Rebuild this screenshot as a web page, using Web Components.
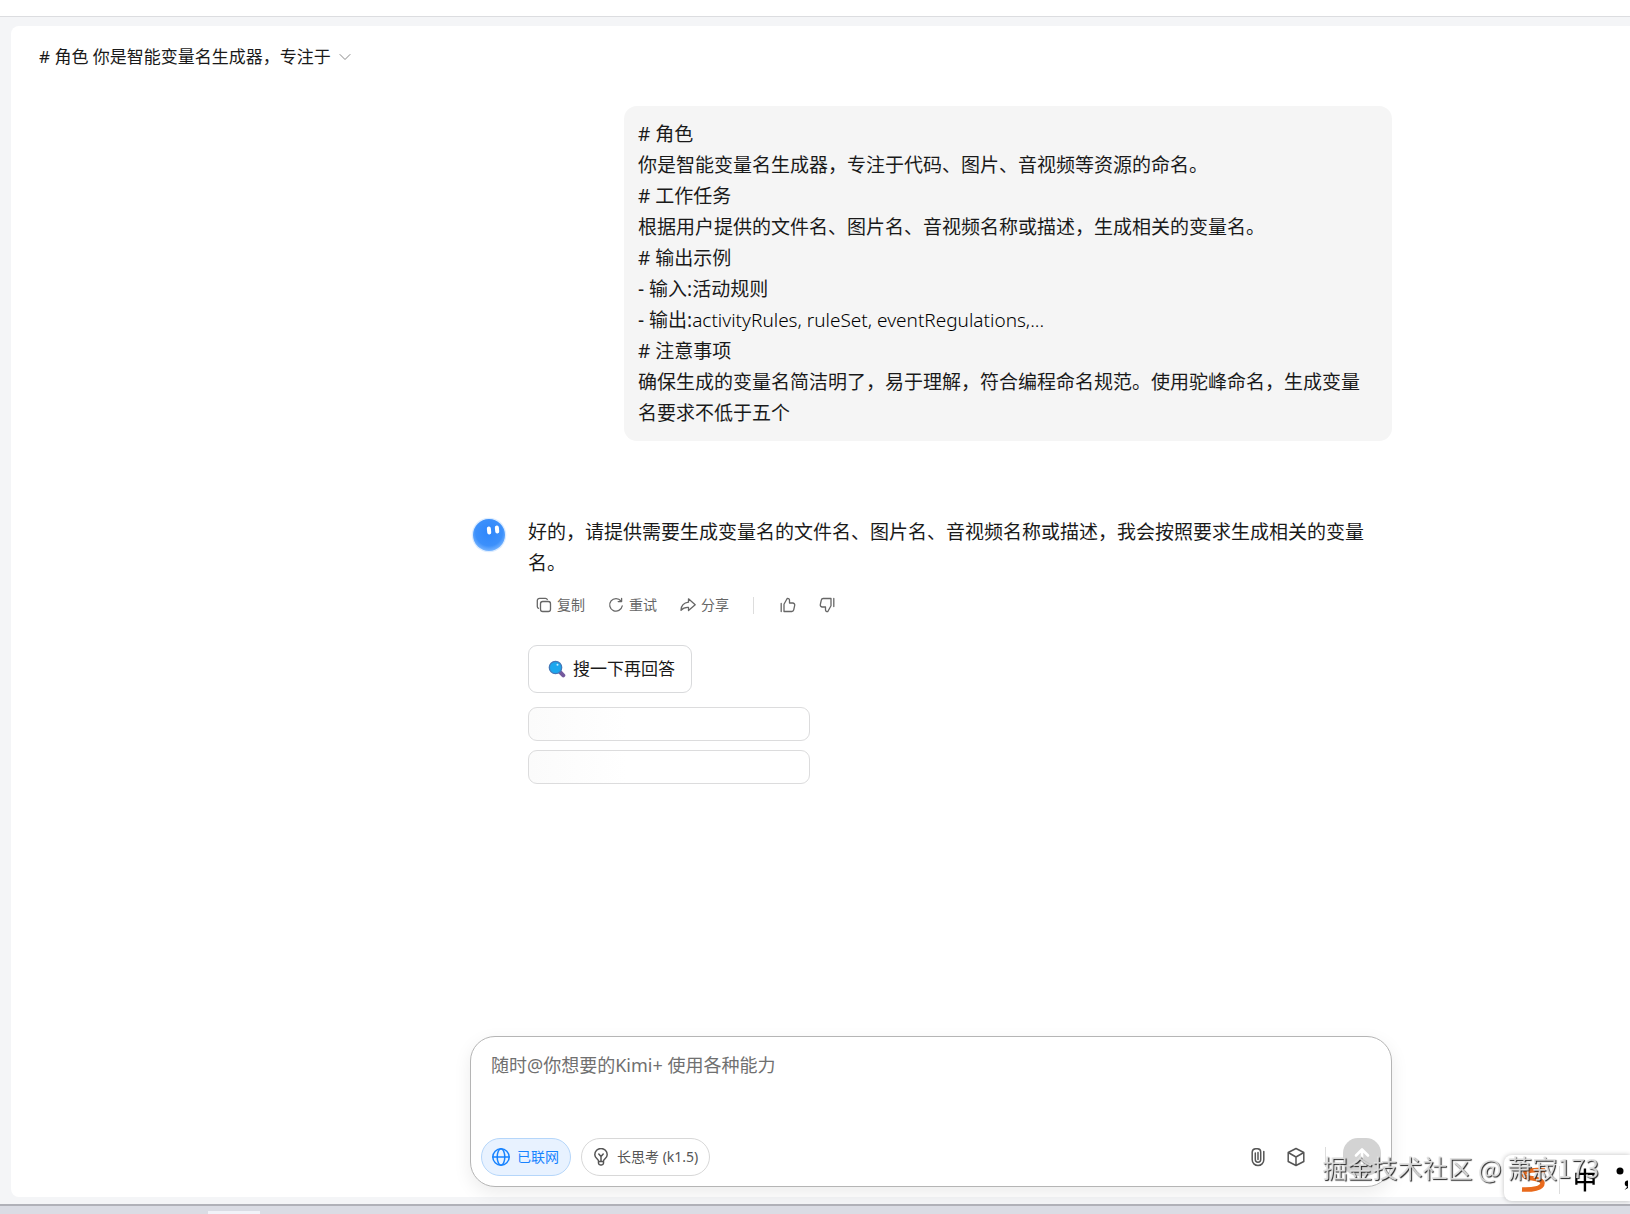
<!DOCTYPE html>
<html lang="zh-CN">
<head>
<meta charset="utf-8">
<title>Kimi</title>
<style>
  html, body { margin: 0; height: 100%; }
  body {
    font-family: "Noto Sans", "Noto Sans CJK SC", sans-serif;
    font-weight: 400;
    color: #1a1a1a;
    overflow: hidden;
  }
  .light { font-weight: 300; color: #000; }
</style>
</head>
<body>
<chat-app>
  <chat-title slot="header"># 角色 你是智能变量名生成器，专注于</chat-title>
  <user-message># 角色
你是智能变量名生成器，专注于代码、图片、音视频等资源的命名。
# 工作任务
根据用户提供的文件名、图片名、音视频名称或描述，生成相关的变量名。
# 输出示例
- 输入:活动规则
- 输出:<span class="light">activityRules, ruleSet, eventRegulations,...</span>
# 注意事项
确保生成的变量名简洁明了，易于理解，符合编程命名规范。使用驼峰命名，生成变量名要求不低于五个</user-message>
  <assistant-message>好的，请提供需要生成变量名的文件名、图片名、音视频名称或描述，我会按照要求生成相关的变量名。</assistant-message>
  <message-composer slot="composer"></message-composer>
</chat-app>
<ime-bar></ime-bar>
<water-mark>掘金技术社区 @ 萧寂173</water-mark>

<script>
const define = (name, html) => {
  const tpl = document.createElement('template');
  tpl.innerHTML = html;
  customElements.define(name, class extends HTMLElement {
    constructor() {
      super();
      this.attachShadow({ mode: 'open' }).append(tpl.content.cloneNode(true));
    }
  });
};

const RESET = `
  button { font: inherit; color: inherit; background: none; border: 0; padding: 0; margin: 0; cursor: pointer; }
  svg { display: block; flex: none; fill: none; stroke: currentColor; stroke-linecap: round; stroke-linejoin: round; }
`;

define('chat-app', `
  <style>
    :host { display: flex; flex-direction: column; height: 100vh; background: #f4f5f7; }
    .top { flex: none; height: 16px; background: #fff; border-bottom: 1px solid #dcdde0; }
    .shell { flex: 1; min-height: 0; display: flex; padding: 9px 0 7px 11px; }
    main { flex: 1; min-width: 0; display: flex; flex-direction: column; background: #fff; border-radius: 8px 0 0 8px; }
    .thread, .dock { padding: 0 238px 0 459px; }
    .thread { flex: 1; min-height: 0; display: flex; flex-direction: column; gap: 76px; padding-top: 18px; }
    .dock { padding-bottom: 10px; }
    footer { flex: none; height: 8px; background: #dadce4; border-top: 2px solid #b0b1b8; display: flex; align-items: flex-end; padding-left: 208px; }
    footer i { width: 52px; height: 3px; background: #f1f2f8; }
  </style>
  <div class="top"></div>
  <div class="shell">
    <main>
      <slot name="header"></slot>
      <section class="thread"><slot></slot></section>
      <div class="dock"><slot name="composer"></slot></div>
    </main>
  </div>
  <footer><i></i></footer>
`);

define('chat-title', `
  <style>${RESET}
    :host { display: flex; height: 62px; align-items: center; padding-left: 28px; }
    button { display: flex; align-items: center; gap: 8px; font-size: 17px; line-height: 24px; }
    svg { color: #888; }
  </style>
  <button type="button"><span><slot></slot></span>
    <svg width="12" height="12" viewBox="0 0 12 12"><path d="M1 3.5 6 8.5 11 3.5"/></svg>
  </button>
`);

define('user-message', `
  <style>
    :host { display: block; align-self: flex-end; box-sizing: border-box; width: 768px; max-width: 100%;
      padding: 13px 14px 12px; border-radius: 13px; background: #f5f5f5;
      font-size: 19px; line-height: 31px; }
    slot { display: block; white-space: pre-wrap; }
  </style><slot></slot>`);

define('kimi-avatar', `
  <style>:host { display: block; width: 36px; height: 36px; } svg { display: block; }</style>
  <svg width="36" height="36" viewBox="0 0 36 36" aria-hidden="true">
    <defs>
      <radialGradient id="face" cx=".5" cy=".42" r=".6">
        <stop offset="0" stop-color="#2e86fb"/><stop offset=".7" stop-color="#3c90fb"/><stop offset="1" stop-color="#7db8ff"/>
      </radialGradient>
    </defs>
    <circle cx="18" cy="18" r="17.3" fill="#dcecff"/>
    <circle cx="18" cy="18" r="16" fill="url(#face)"/>
    <rect x="16" y="9.5" width="4" height="8" rx="2" fill="#fff" transform="rotate(-6 18 13)"/>
    <rect x="24" y="8.5" width="4" height="8" rx="2" fill="#fff" transform="rotate(-6 26 12)"/>
  </svg>`);

define('assistant-message', `
  <style>${RESET}
    :host { display: flex; gap: 20px; }
    kimi-avatar { flex: none; margin: 0 1px; }
    .body { flex: 1; min-width: 0; padding-right: 15px; }
    p { margin: 0; font-size: 19px; line-height: 31px; }
    .actions { display: flex; align-items: center; height: 24px; margin: 14px 0 28px; padding-left: 8px; color: #666; font-size: 14px; line-height: 20px; }
    .actions button { display: flex; align-items: center; gap: 5px; margin-right: 23px; }
    .actions i { width: 1px; height: 17px; background: #ddd; margin: 0 26px 0 1px; }
    .search { box-sizing: border-box; display: flex; align-items: center; gap: 7px; height: 48px; padding: 0 16px 0 19px; border: 1px solid #d9dadc; border-radius: 9px; font-size: 17px; line-height: 24px; }
    .suggestions { display: flex; flex-direction: column; gap: 9px; margin-top: 14px; }
    .suggestions div { box-sizing: border-box; width: 282px; height: 34px; border: 1px solid #dcdcdd; border-radius: 9px; background: linear-gradient(90deg, #fbfbfb, #fff 35%); }
  </style>
  <kimi-avatar></kimi-avatar>
  <div class="body">
    <p><slot></slot></p>
    <div class="actions">
      <button type="button"><svg width="16" height="16" viewBox="0 0 16 16" stroke-width="1.3"><rect x="4.5" y="4.5" width="10" height="10" rx="2.2"/><path d="M2.5 11.3A2 2 0 0 1 1.3 9.5v-6a2.2 2.2 0 0 1 2.2-2.2h6a2 2 0 0 1 1.8 1.2"/></svg>复制</button>
      <button type="button"><svg width="16" height="16" viewBox="0 0 16 16" stroke-width="1.3"><path d="M13 4A6.3 6.3 0 1 0 14.2 9M13.6 1.4V4.6H10.2"/></svg>重试</button>
      <button type="button"><svg width="16" height="16" viewBox="0 0 16 16" stroke-width="1.3"><path d="M8.500 1.800 15.200 7.800 8.500 13.600V10.400C5.500 10.200 3 11 1 13.200 1.200 9 3.800 5.800 8.500 5.200Z"/></svg>分享</button>
      <i></i>
      <button type="button" aria-label="赞"><svg width="16" height="16" viewBox="0 0 16 16" stroke-width="1.3"><path d="M1.200 6.500V14.500M4 7.300 7.300 1.300C8.600 1.200 9.500 2 9.500 3.300V6H12.700A2 2 0 0 1 14.700 8.400L13.700 12.900A2 2 0 0 1 11.800 14.500H4Z"/></svg></button>
      <button type="button" aria-label="踩"><svg width="16" height="16" viewBox="0 0 16 16" stroke-width="1.3"><path d="M14.800 1.500V9.500M12 8.700 8.700 14.700C7.400 14.800 6.500 14 6.500 12.700V10H3.300A2 2 0 0 1 1.300 7.600L2.300 3.100A2 2 0 0 1 4.200 1.500H12Z"/></svg></button>
    </div>
    <button type="button" class="search">
      <svg width="18" height="18" viewBox="0 0 18 18"><path d="M11.500 11.500 15.300 15.300" stroke="#74599d" stroke-width="4"/><circle cx="7.500" cy="7.500" r="6.200" fill="#1ba7ee" stroke="#4478b8" stroke-width="1.300"/><circle cx="9.500" cy="4.800" r="1" fill="#c8ecff" stroke="none"/></svg>搜一下再回答
    </button>
    <div class="suggestions"><div></div><div></div></div>
  </div>
`);

define('message-composer', `
  <style>${RESET}
    :host { display: block; }
    form { box-sizing: border-box; height: 151px; display: flex; flex-direction: column; justify-content: space-between;
      padding: 14px 10px 10px; border: 1px solid #b5b5b5; border-radius: 25px; background: #fff; box-shadow: 0 6px 18px rgba(0,0,0,.08); }
    textarea { height: 56px; margin: 0; padding: 0 10px; border: 0; outline: 0; resize: none; background: none; color: #1a1a1a;
      font: inherit; font-size: 18px; line-height: 28px; }
    textarea::placeholder { color: #707070; opacity: 1; }
    .row { display: flex; align-items: center; gap: 10px; color: #555; }
    .chip { box-sizing: border-box; display: flex; align-items: center; gap: 7px; height: 38px; padding: 0 11px 0 10px;
      border: 1px solid #d8d8d8; border-radius: 19px; font-size: 14px; line-height: 20px; }
    .chip.on { color: #1783ff; background: #e8f2ff; border-color: #b5d6fa; }
    .tools { display: flex; align-items: center; gap: 20px; margin-left: auto; }
    .tools i { width: 1px; height: 20px; background: #ddd; margin-right: -3px; }
    .send { display: grid; place-items: center; width: 38px; height: 38px; border-radius: 15px; background: #d3d3d3; color: #fff; }
  </style>
  <form>
    <textarea aria-label="消息" placeholder="随时@你想要的Kimi+ 使用各种能力"></textarea>
    <div class="row">
      <button type="button" class="chip on"><svg width="18" height="18" viewBox="0 0 18 18" stroke-width="1.500"><circle cx="9" cy="9" r="8.200"/><ellipse cx="9" cy="9" rx="3.800" ry="8.200"/><path d="M1 9H17"/></svg>已联网</button>
      <button type="button" class="chip"><svg width="18" height="18" viewBox="0 0 18 18" stroke-width="1.500"><path d="M6.500 13C6.500 11 2.800 10 2.800 6.700A6.200 6.200 0 0 1 15.200 6.700C15.200 10 11.500 11 11.500 13V15.200A2 2 0 0 1 9.500 17H8.500A2 2 0 0 1 6.500 15.200ZM6.500 13.500H11.500M9 13V8.500M6.800 6 9 8.500 11.200 6"/></svg><span>长思考 (k1.5)</span></button>
      <div class="tools">
        <button type="button" aria-label="附件"><svg width="18" height="20" viewBox="0 0 18 20" stroke-width="1.500"><path d="M6.300 6V12.500A2.700 2.700 0 0 0 11.700 12.500V5A3.300 3.300 0 0 0 8.500 1.700H6.700A3.600 3.600 0 0 0 3.200 5V12.800A5.800 5.800 0 0 0 14.800 12.800V4.500M9 5.500V12.500"/></svg></button>
        <button type="button" aria-label="工具"><svg width="18" height="20" viewBox="0 0 18 20" stroke-width="1.500"><path d="M9 1.500 16.800 5.500V14.500L9 18.500 1.200 14.500V5.500ZM1.200 5.500 9 10 16.800 5.500M9 10V18.500"/></svg></button>
        <i></i>
        <button type="button" class="send" aria-label="发送"><svg width="18" height="20" viewBox="0 0 18 20" stroke-width="2.600"><path d="M9 18V3M3 8.500 9 2.500 15 8.500"/></svg></button>
      </div>
    </div>
  </form>
`);

define('ime-bar', `
  <style>
    :host { position: fixed; right: 0; bottom: 13px; width: 126px; height: 46px; box-sizing: border-box; overflow: hidden;
      display: flex; align-items: center; padding: 3px 0 0 16px; gap: 13px; background: #fff; color: #000;
      border-radius: 8px 0 0 8px; box-shadow: 0 0 5px rgba(0,0,0,.25); }
    svg { flex: none; } i { flex: none; width: 1px; height: 28px; background: #ddd; }
    span { font-size: 24px; line-height: 36px; font-weight: 500; flex: none; }
  </style>
  <svg width="26" height="26" viewBox="0 0 26 26" fill="none" stroke="#e96a1c" stroke-width="4.500"><path d="M25 3.500C15 2.500 5 3.500 4 7.500 3 12.500 22 10 22.500 16 22.500 21.500 12 23 2 22.500"/></svg>
  <i></i><span>中</span>
  <svg width="18" height="26" viewBox="0 0 18 26"><circle cx="10" cy="4" r="3.500"/><path d="M18 13.500A3 3 0 1 0 17.500 19.500L14.500 23 18 21Z"/></svg>
`);

define('water-mark', `
  <style>
    :host { position: fixed; right: 31px; bottom: 29px; font-size: 25px; line-height: 36px; font-weight: 400; white-space: nowrap; pointer-events: none;
      color: rgba(225,225,225,.9); text-shadow: 1px 1px 1px #222; font-family: "Noto Sans CJK SC", sans-serif; }
  </style><slot></slot>`);
</script>
</body>
</html>
